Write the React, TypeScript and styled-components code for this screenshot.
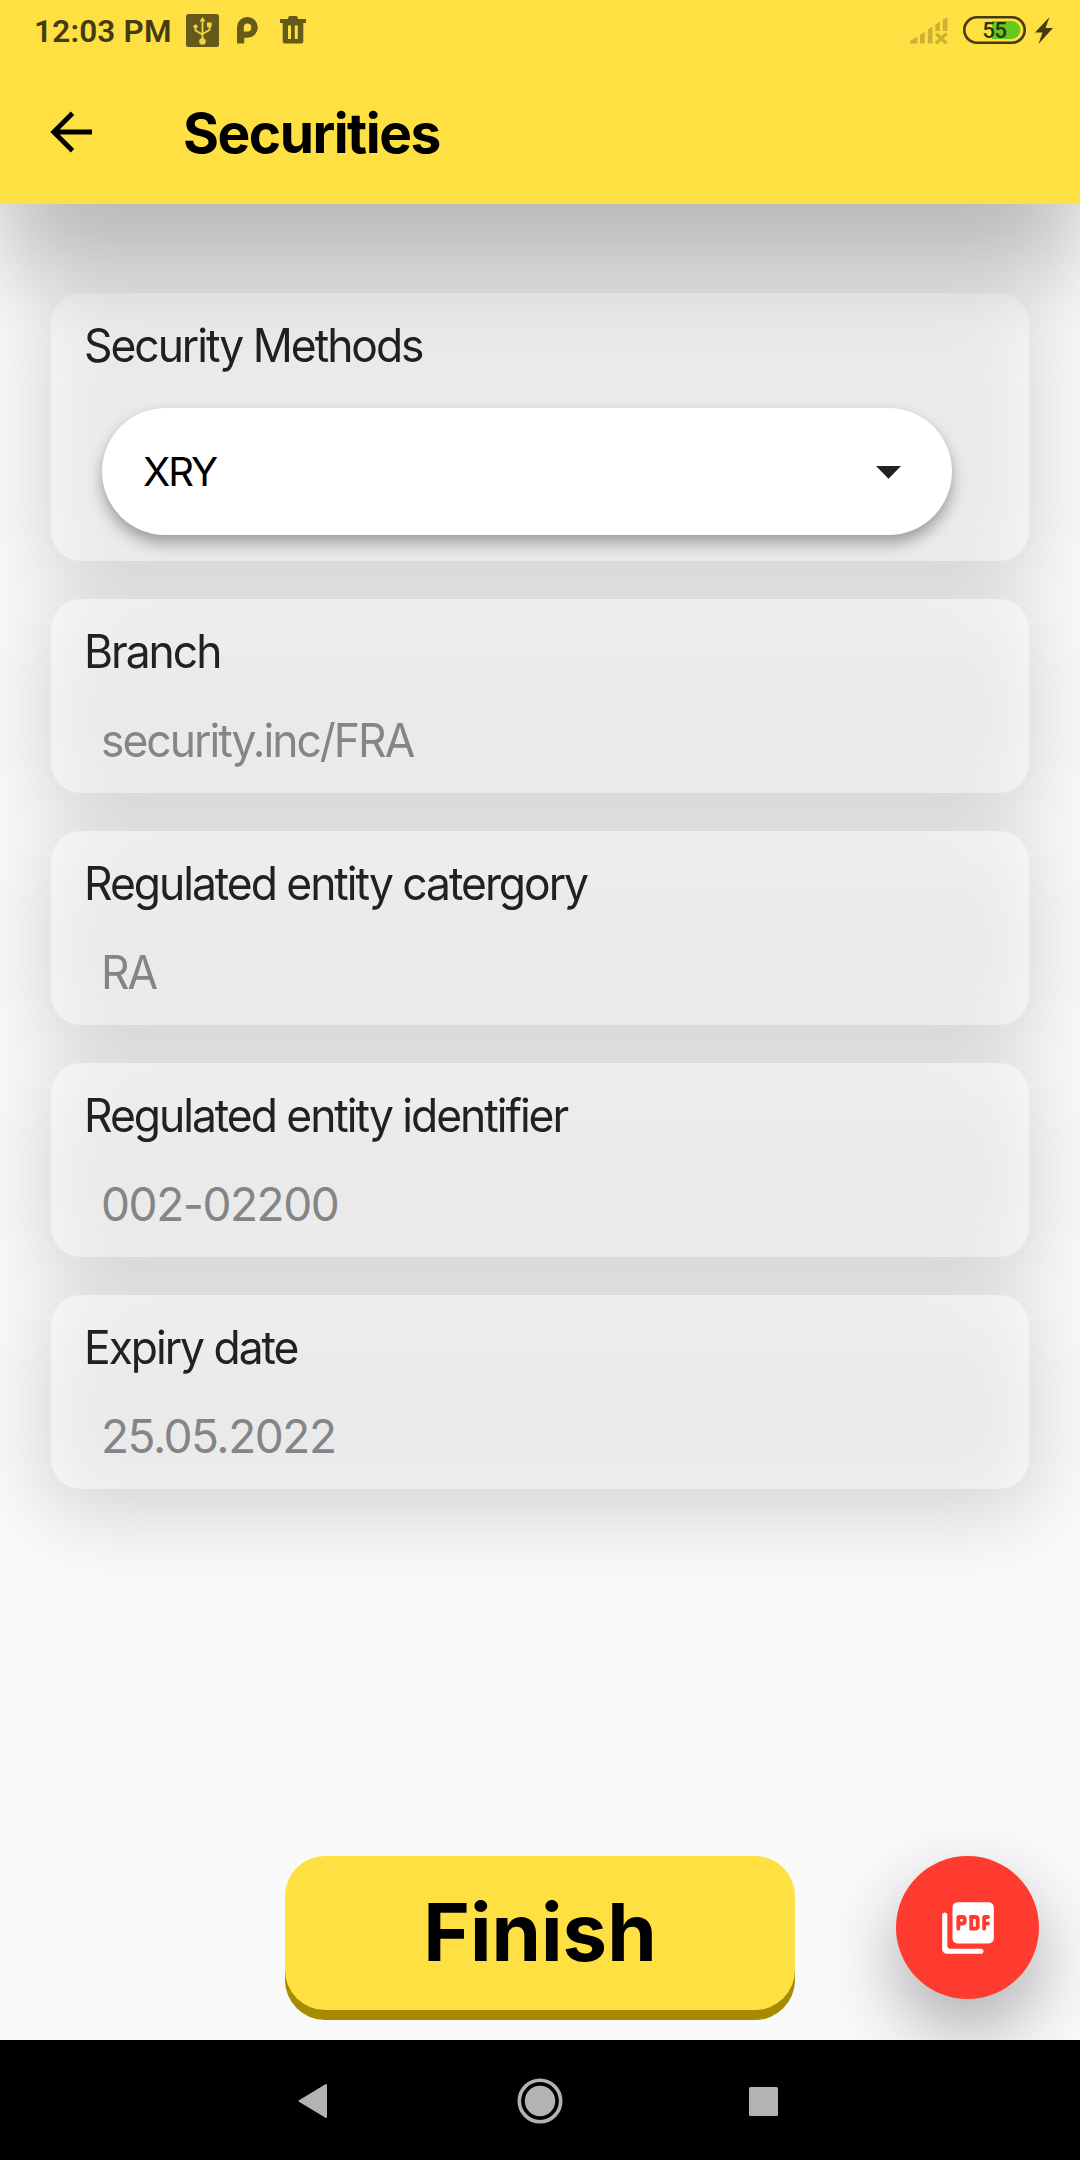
import React from "react";
import styled, { createGlobalStyle } from "styled-components";

const YELLOW = "#FFE042";

const GlobalStyle = createGlobalStyle`
  *, *::before, *::after { box-sizing: border-box; }
  body { margin: 0; background: #fafafa; }
`;

const Screen = styled.div`
  width: 1080px;
  height: 2160px;
  display: flex;
  flex-direction: column;
  overflow: hidden;
  background: #fafafa;
  font-family: Inter, "Liberation Sans", sans-serif;
`;

const Header = styled.header`
  position: relative;
  z-index: 2;
  flex: none;
  height: 204px;
  background: ${YELLOW};
  box-shadow: 0 76px 92px -6px rgba(0, 0, 0, 0.26);
`;

const StatusBar = styled.div`
  height: 60px;
  padding: 0 27px 0 34px;
  display: flex;
  align-items: center;
  justify-content: space-between;
`;

const StatusGroup = styled.div`
  display: flex;
  align-items: center;
`;

const Clock = styled.span`
  width: 152px;
  font-family: Roboto, sans-serif;
  font-weight: 600;
  font-size: 31.5px;
  line-height: 40px;
  letter-spacing: 0.2px;
  margin-top: 3px;
  color: #443b11;
  white-space: nowrap;
`;

const TitleRow = styled.div`
  height: 144px;
  display: flex;
  align-items: center;
  padding: 0 50px;
  gap: 91px;
`;

const BackButton = styled.button`
  display: flex;
  padding: 0;
  border: 0;
  background: none;
`;

const Title = styled.h1`
  margin: 2px 0 0;
  font-size: 55px;
  line-height: 66px;
  font-weight: 700;
  letter-spacing: -1.5px;
  color: #000;
`;

const Content = styled.main`
  flex: 1;
  display: flex;
  flex-direction: column;
  gap: 38px;
  padding: 89px 51px 0;
`;

const Card = styled.section`
  position: relative;
  isolation: isolate;
  padding: 24px 34px 25px 33px;
  border-radius: 30px;

  &::before {
    content: "";
    position: absolute;
    z-index: -1;
    inset: 10px -8px -26px;
    border-radius: 38px;
    background: rgba(0, 0, 0, 0.15);
    filter: blur(40px);
  }

  &::after {
    content: "";
    position: absolute;
    z-index: -1;
    inset: 0;
    border-radius: 30px;
    background: rgba(255, 255, 255, 0.5);
  }
`;

const Label = styled.div`
  font-size: 46px;
  line-height: 56px;
  letter-spacing: -2.1px;
  transform: scaleX(0.965);
  transform-origin: left;
  color: #212121;
`;

const Value = styled.div<{ $numeric?: boolean }>`
  margin: 33px 0 0 17px;
  font-size: 46px;
  line-height: 56px;
  letter-spacing: ${(p) => (p.$numeric ? "-1.45px" : "-2.05px")};
  transform: ${(p) => (p.$numeric ? "none" : "scaleX(0.965)")};
  transform-origin: left;
  color: #858588;
`;

const Select = styled.button`
  width: 850px;
  height: 127px;
  margin: 35px 0 1px 18px;
  padding: 0 51px 0 41px;
  display: flex;
  align-items: center;
  justify-content: space-between;
  border: 0;
  border-radius: 64px;
  background: #fff;
  box-shadow: 0 9px 15px rgba(0, 0, 0, 0.3), 0 1px 6px rgba(0, 0, 0, 0.06);
  font-family: inherit;
  font-size: 40px;
  letter-spacing: -2px;
  color: #000;
`;

const Actions = styled.footer`
  flex: none;
  display: grid;
  grid-template-columns: 1fr 510px 1fr;
  align-items: start;
  height: 184px;
`;

const FinishButton = styled.button`
  grid-column: 2;
  height: 154px;
  padding: 0 0 2px;
  border: 0;
  border-radius: 40px;
  background: ${YELLOW};
  box-shadow: 0 10px 0 #a68b00;
  font-family: inherit;
  font-size: 79.5px;
  font-weight: 700;
  letter-spacing: 0;
  color: #000;
`;

const PdfButton = styled.button`
  justify-self: end;
  width: 143px;
  height: 143px;
  margin-right: 41px;
  padding: 0;
  display: flex;
  align-items: center;
  justify-content: center;
  border: 0;
  border-radius: 50%;
  background: #ff3b30;
  box-shadow: 0 32px 76px rgba(0, 0, 0, 0.32);
`;

const NavBar = styled.nav`
  position: relative;
  z-index: 1;
  flex: none;
  height: 120px;
  padding: 2px 302px 0 297px;
  display: flex;
  align-items: center;
  justify-content: space-between;
  background: #000;
`;

const Icon = styled.svg<{ $gap?: number }>`
  display: block;
  flex: none;
  margin-left: ${(p) => p.$gap ?? 0}px;
`;

const UsbIcon = () => (
  <Icon width="33" height="33" viewBox="0 0 33 33">
    <rect width="33" height="33" rx="2.5" fill="#665a1a" />
    <g stroke="#f2d540" strokeWidth="1.8" fill="none">
      <path d="M16.5 6v20M9.5 13v3.5l7 4M23.5 12v4l-7 4" />
    </g>
    <g fill="#f2d540">
      <path d="M16.5 3l3 4.5h-6z" />
      <circle cx="16.5" cy="27.5" r="3.3" />
      <circle cx="9.5" cy="12.5" r="2.1" />
      <rect x="21" y="8.5" width="4.6" height="4.6" />
    </g>
  </Icon>
);

const ParkingIcon = () => (
  <Icon $gap={18} width="21" height="27" viewBox="0 0 21 27">
    <path
      fill="#665a1a"
      fillRule="evenodd"
      d="M0 26.5V10.5a10.4 10.4 0 1 1 10.5 10.3H7.2v5.7zM10.4 6.6a3.8 3.8 0 0 0-3.6 3.9v4h3.6a3.9 3.9 0 1 0 0-7.9z"
    />
  </Icon>
);

const TrashIcon = () => (
  <Icon $gap={22} width="26" height="28" viewBox="0 0 26 28">
    <path
      fill="#665a1a"
      fillRule="evenodd"
      d="M9 0h8l1.2 3H26v4h-2.7v18.5a2 2 0 0 1-2 2H4.7a2 2 0 0 1-2-2V7H0V3h7.8zM8 9.500v13.500h3V9.500zm6.800 0v13.500h3V9.500z"
    />
  </Icon>
);

const SignalIcon = () => (
  <Icon width="38" height="27" viewBox="0 0 38 27">
    <g fill="#cbb235">
      <path d="M0 26.5v-2.5l7.3-4.5v7zM10 18l4.7-3v11.5H10zM17.8 12.5l4.7-3v17h-4.7zM25.3 7.5l4.7-3v9.500h-4.700zM32.800 3l4.700-3v14h-4.700z" />
    </g>
    <path d="M27 17.5l8.5 8M35.5 17.5l-8.5 8" stroke="#cbb235" strokeWidth="3.4" strokeLinecap="round" />
  </Icon>
);

const BatteryIcon = () => (
  <Icon $gap={15} width="63" height="28" viewBox="0 0 63 28">
    <path d="M29 5h19.5a9 9 0 0 1 0 18H29z" fill="#66c91e" />
    <rect x="1.3" y="1.3" width="60.4" height="25.4" rx="12.7" fill="none" stroke="#443b11" strokeWidth="2.6" />
    <text
      x="31.3"
      y="22"
      textAnchor="middle"
      fontFamily="Roboto, sans-serif"
      fontWeight="500"
      fontSize="22.5"
      letterSpacing="-0.7"
      fill="#2b360c"
    >
      55
    </text>
  </Icon>
);

const BoltIcon = () => (
  <Icon $gap={9} width="18" height="27" viewBox="0 0 18 27">
    <path d="M14.5 0L0 15.5h7.500L3.500 27 18 11h-7.500z" fill="#443b11" />
  </Icon>
);

const BackArrow = () => (
  <Icon width="42" height="42" viewBox="0 0 42 42" fill="none" stroke="#000" strokeWidth="4.8">
    <path d="M42 21H4M22.5 2.2L3.700 21l18.800 18.800" />
  </Icon>
);

const CaretDown = () => (
  <Icon width="25" height="15" viewBox="0 0 25 15">
    <path d="M0 2h25L12.5 14.700z" fill="#212121" />
  </Icon>
);

const PdfIcon = () => (
  <Icon width="62" height="62" viewBox="0 0 24 24" fill="#fff">
    <path d="M20 2H8c-1.100 0-2 .9-2 2v12c0 1.100.9 2 2 2h12c1.100 0 2-.9 2-2V4c0-1.100-.9-2-2-2zm-8.500 7.500c0 .83-.67 1.500-1.500 1.500H9v1.250c0 .41-.34.75-.75.75s-.75-.34-.75-.75V8c0-.55.45-1 1-1H10c.83 0 1.500.67 1.500 1.500v1zm5 2c0 .83-.67 1.500-1.500 1.500h-2c-.28 0-.5-.22-.5-.5v-5c0-.28.22-.5.5-.5h2c.83 0 1.500.67 1.500 1.500v3zm4-3.750c0 .41-.34.75-.75.75H19v1h.75c.41 0 .75.34.75.75s-.34.75-.75.75H19v1.250c0 .41-.34.75-.75.75s-.75-.34-.75-.75V8c0-.55.45-1 1-1h1.250c.41 0 .75.34.75.75zM9 9.500h1v-1H9v1zM3 6c-.55 0-1 .45-1 1v13c0 1.100.9 2 2 2h13c.55 0 1-.45 1-1s-.45-1-1-1H5c-.55 0-1-.45-1-1V7c0-.55-.45-1-1-1zm11 5.500h1v-3h-1v3z" />
  </Icon>
);

const fields = [
  { label: "Branch", value: "security.inc/FRA" },
  { label: "Regulated entity catergory", value: "RA" },
  { label: "Regulated entity identifier", value: "002-02200", numeric: true },
  { label: "Expiry date", value: "25.05.2022", numeric: true },
];

export default function App() {
  return (
    <>
      <GlobalStyle />
      <Screen>
        <Header>
          <StatusBar>
            <StatusGroup>
              <Clock>12:03 PM</Clock>
              <UsbIcon />
              <ParkingIcon />
              <TrashIcon />
            </StatusGroup>
            <StatusGroup>
              <SignalIcon />
              <BatteryIcon />
              <BoltIcon />
            </StatusGroup>
          </StatusBar>
          <TitleRow>
            <BackButton aria-label="Back">
              <BackArrow />
            </BackButton>
            <Title>Securities</Title>
          </TitleRow>
        </Header>
        <Content>
          <Card>
            <Label>Security Methods</Label>
            <Select>
              XRY
              <CaretDown />
            </Select>
          </Card>
          {fields.map((f) => (
            <Card key={f.label}>
              <Label>{f.label}</Label>
              <Value $numeric={f.numeric}>{f.value}</Value>
            </Card>
          ))}
        </Content>
        <Actions>
          <FinishButton>Finish</FinishButton>
          <PdfButton aria-label="Export PDF">
            <PdfIcon />
          </PdfButton>
        </Actions>
        <NavBar>
          <Icon width="31" height="36" viewBox="0 0 31 36">
            <path d="M2.5 18L29 2v32z" fill="#b3b3b3" stroke="#b3b3b3" strokeWidth="2" strokeLinejoin="round" />
          </Icon>
          <Icon $gap={3} width="46" height="46" viewBox="0 0 46 46">
            <circle cx="23" cy="23" r="20.7" fill="none" stroke="#b3b3b3" strokeWidth="3.6" />
            <circle cx="23" cy="23" r="15.2" fill="#b3b3b3" />
          </Icon>
          <Icon width="29" height="29" viewBox="0 0 29 29">
            <rect width="29" height="29" rx="1.5" fill="#b3b3b3" />
          </Icon>
        </NavBar>
      </Screen>
    </>
  );
}
